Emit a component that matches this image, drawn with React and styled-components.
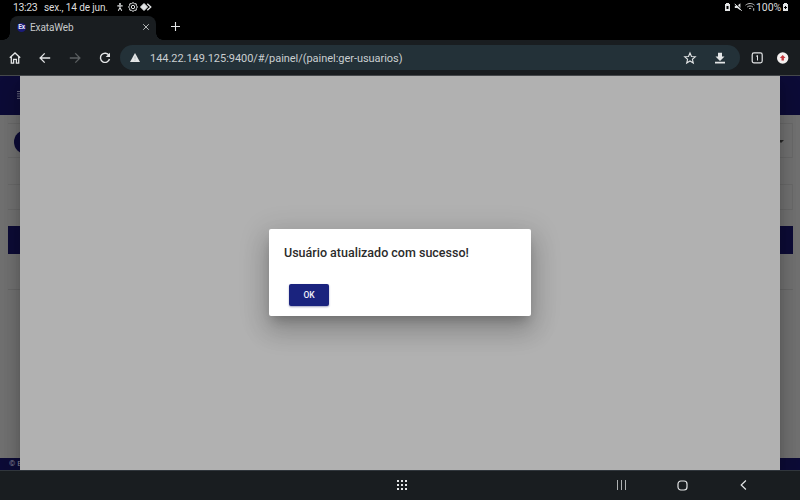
import React from 'react';
import styled, { createGlobalStyle } from 'styled-components';

const GlobalStyle = createGlobalStyle`
  * { box-sizing: border-box; }
  body { margin: 0; background: #000; font-family: Roboto, "Liberation Sans", sans-serif; }
`;

const Screen = styled.div`
  width: 800px;
  height: 500px;
  display: flex;
  flex-direction: column;
  overflow: hidden;
  background: #000;
`;

const StatusBar = styled.header`
  height: 16px;
  flex: none;
  display: flex;
  align-items: flex-start;
  justify-content: space-between;
  padding: 0 12px 0 13px;
  color: #dedede;
  font-size: 10.5px;
  line-height: 16px;
  white-space: nowrap;
`;

const StatusGroup = styled.div`
  display: flex;
  align-items: center;
  height: 14px;
`;

const Clock = styled.span`
  width: 31px;
  height: 15px;
  letter-spacing: -0.4px;
`;

const DateText = styled.span`
  width: 72px;
  height: 15px;
  font-size: 10px;
  letter-spacing: -0.12px;
`;

const Battery = styled.span`
  width: 27px;
  height: 15px;
  font-size: 10.5px;
  letter-spacing: -0.05px;
`;

const Glyph = styled.svg`
  display: block;
  flex: none;
  width: ${p => p.$w || 12}px;
  height: ${p => p.$h || p.$w || 12}px;
  margin-left: ${p => p.$gap || 0}px;
  color: ${p => p.$color || '#e3e5e6'};
  fill: none;
  stroke: currentColor;
  stroke-width: ${p => p.$stroke || 1.3};
  overflow: visible;
`;

const TabStrip = styled.div`
  height: 24px;
  flex: none;
  display: flex;
  padding-left: 10px;
`;

const Tab = styled.div`
  position: relative;
  width: 146px;
  height: 24px;
  display: flex;
  align-items: center;
  padding: 0 6px 2px 7px;
  border-radius: 8px 8px 0 0;
  background: #191d20;
  color: #c7cacb;
  font-size: 10px;
  letter-spacing: -0.12px;
  &::before, &::after {
    content: "";
    position: absolute;
    bottom: 0;
    width: 7px;
    height: 7px;
  }
  &::before { left: -7px; background: radial-gradient(circle at 0 0, transparent 6.5px, #191d20 7px); }
  &::after { right: -7px; background: radial-gradient(circle at 100% 0, transparent 6.5px, #191d20 7px); }
`;

const Favicon = styled.span`
  width: 9px;
  height: 9px;
  margin-right: 4px;
  display: grid;
  place-items: center;
  border-radius: 50%;
  background: #1b1b78;
  color: #e8e8f4;
  font-size: 6.5px;
  font-weight: 700;
  letter-spacing: -0.2px;
`;

const TabTitle = styled.span`
  flex: 1;
`;

const Toolbar = styled.nav`
  height: 36px;
  flex: none;
  display: flex;
  align-items: center;
  padding-left: 9px;
  background: #191d20;
  border-bottom: 1px solid #45484b;
`;

const AddressBar = styled.div`
  width: 620px;
  height: 25px;
  margin-left: 9px;
  padding: 0 14px 0 10px;
  display: flex;
  align-items: center;
  border-radius: 13px;
  background: #233138;
`;

const Address = styled.span`
  flex: 1;
  margin: 1px 0 0 10px;
  color: #c9ced0;
  font-size: 11px;
  letter-spacing: -0.04px;
`;

const Page = styled.main`
  position: relative;
  height: 394px;
  flex: none;
  display: flex;
  flex-direction: column;
  overflow: hidden;
  background: #747474;
`;

const PageHeader = styled.div`
  height: 39px;
  flex: none;
  display: flex;
  align-items: center;
  padding: 0 0 2px 17px;
  background: #0d0c38;
`;

const PageBody = styled.div`
  flex: 1;
  display: flex;
  flex-direction: column;
  padding: 8px 7px 0 8px;
`;

const FieldRow = styled.div`
  height: ${p => p.$h}px;
  margin-bottom: ${p => p.$after}px;
  display: flex;
  align-items: center;
  justify-content: space-between;
  padding: 2px 8px 0 6px;
  border: 1px solid #6c6c6c;
  border-width: 1px 1px 1px 0;
`;

const RoundButton = styled.span`
  width: 24px;
  height: 24px;
  border-radius: 50%;
  background: #0d0c38;
`;

const Caret = styled.span`
  border: 3px solid transparent;
  border-top-color: #292929;
  border-bottom: 0;
`;

const TableHead = styled.div`
  height: 28px;
  margin-bottom: 35px;
  background: #0d0c38;
`;

const Rule = styled.div`
  height: 1px;
  background: #6a6a6a;
`;

const PageFooter = styled.footer`
  height: 12px;
  flex: none;
  padding-left: 9px;
  background: #0d0c38;
  color: #8d8d9f;
  font-size: 8px;
  line-height: 11px;
`;

const Sheet = styled.section`
  position: absolute;
  inset: 0 20px;
  display: flex;
  justify-content: center;
  align-items: center;
  padding-bottom: 2px;
  background: #b1b1b1;
  box-shadow: 0 7px 10px -4px rgba(0, 0, 0, .2), 0 15px 24px 2px rgba(0, 0, 0, .15), 0 6px 28px 5px rgba(0, 0, 0, .12);
`;

const Dialog = styled.div`
  width: 262px;
  height: 87px;
  display: flex;
  flex-direction: column;
  align-items: flex-start;
  padding: 16px 15px 10px;
  border-radius: 2px;
  background: #fff;
  box-shadow: 0 7px 10px -4px rgba(0, 0, 0, .2), 0 15px 24px 2px rgba(0, 0, 0, .15), 0 6px 28px 5px rgba(0, 0, 0, .12);
`;

const Message = styled.h2`
  margin: 0 0 23px;
  color: #2b2b2b;
  font-size: 12.5px;
  line-height: 16px;
  font-weight: 500;
  letter-spacing: 0;
`;

const OkButton = styled.button`
  width: 40px;
  height: 22px;
  margin: 0 0 0 5px;
  padding: 0;
  border: 0;
  border-radius: 2px;
  background: #1a237e;
  color: #f2f2fa;
  font: 500 8.5px/22px Roboto, sans-serif;
  box-shadow: 0 1px 2px rgba(20, 25, 100, .4);
`;

const SystemNav = styled.footer`
  height: 30px;
  flex: none;
  display: flex;
  align-items: center;
  padding: 0 0 1px 397px;
  background: #191d20;
  border-top: 1px solid #30363c;
`;

export default function App() {
  return (
    <>
      <GlobalStyle />
      <Screen>
        <StatusBar>
          <StatusGroup>
            <Clock>13:23</Clock>
            <DateText>sex., 14 de jun.</DateText>
            <Glyph $w={8} $h={8} $stroke={1.2} viewBox="0 0 8 9">
              <circle cx="4" cy="1.2" r="1.1" fill="currentColor" stroke="none" />
              <path d="M1 3.2h6M4 3v2.8M4 5.4 2 8.7M4 5.4l2 3.3" />
            </Glyph>
            <Glyph $w={10} $gap={4} $stroke={1} viewBox="0 0 10 10">
              <path d="M5 .6 6.4 1.6 8.2 1.8 8.4 3.6 9.4 5 8.4 6.4 8.2 8.2 6.4 8.4 5 9.4 3.6 8.4 1.8 8.2 1.6 6.4.6 5 1.6 3.6 1.8 1.8 3.6 1.6z" />
              <circle cx="5" cy="5" r="1.7" />
            </Glyph>
            <Glyph $w={12} $h={8} $gap={2} $stroke={1} viewBox="0 0 12 8">
              <path d="m4 .5 3.5 3.5L4 7.5.5 4z" fill="currentColor" />
              <path d="m7.3.7 3.5 3.3-3.5 3.3" strokeWidth="1.3" />
            </Glyph>
          </StatusGroup>
          <StatusGroup>
            <Glyph $w={5} $h={8} viewBox="0 0 5 8">
              <path d="M1 0h3v1h1v7H0V1h1z" fill="currentColor" stroke="none" />
              <rect x="1.5" y="3" width="2" height="3" fill="#000" stroke="none" />
            </Glyph>
            <Glyph $w={9} $h={8} $gap={4} $stroke={1} viewBox="0 0 9 8">
              <path d="M.8 2.8h2.4L6.4.3v7L3.2 5H.8z" fill="currentColor" stroke="none" />
              <path d="m1.5.2 7 7" stroke="#000" />
              <path d="m.7.8 7 7" />
            </Glyph>
            <Glyph $w={11} $h={8} $gap={2} $stroke={1} $color="#bdbdbd" viewBox="0 0 11 8">
              <path d="M.5 2.2c3-2.3 6.4-2.3 9 0M2.2 4c2-1.4 4-1.4 5.7 0M4 5.7q1.2-.7 2.2 0M8.7 5.2v2.6" />
            </Glyph>
            <Battery>100%</Battery>
            <Glyph $w={5} $h={8} viewBox="0 0 5 8">
              <path d="M1 0h3v1h1v7H0V1h1z" fill="currentColor" stroke="none" />
              <path d="M2.5 3v3M1 4.5h3" stroke="#000" strokeWidth="1" />
            </Glyph>
          </StatusGroup>
        </StatusBar>

        <TabStrip>
          <Tab>
            <Favicon>Ex</Favicon>
            <TabTitle>ExataWeb</TabTitle>
            <Glyph $w={8} $stroke={1} $color="#b4b7b8" viewBox="0 0 8 8"><path d="m1.2 1.2 5.6 5.6m0-5.6L1.2 6.8" /></Glyph>
          </Tab>
          <Glyph $w={9} $h={22} $gap={15} $stroke={1.1} viewBox="0 0 9 22"><path d="M4.5 6v9M0 10.5h9" /></Glyph>
        </TabStrip>

        <Toolbar>
          <Glyph $w={12} viewBox="0 0 12 12"><path d="M2.3 4.7v6.4h2.3V7.3h2.8v3.8h2.3V4.7M.8 5.8 6 1l5.2 4.8" /></Glyph>
          <Glyph $gap={18} viewBox="0 0 12 12"><path d="M11.2 6H1.3M5.7 1.4 1.1 6l4.6 4.6" /></Glyph>
          <Glyph $gap={18} $color="#5b5f61" viewBox="0 0 12 12"><path d="M.8 6h9.9M6.3 1.4 10.9 6l-4.6 4.6" /></Glyph>
          <Glyph $gap={18} $stroke={1.4} viewBox="0 0 12 12">
            <path d="M10 3.4A4.6 4.6 0 1 0 10.5 7" />
            <path d="M11 .8v4.3H6.7z" fill="currentColor" stroke="none" />
          </Glyph>
          <AddressBar>
            <Glyph $w={10} $h={9} viewBox="0 0 10 9">
              <path d="m5 0 5 9H0z" fill="currentColor" stroke="none" />
              <path d="M5 3.4v2.4M5 6.7v1" stroke="#a3adb1" strokeWidth=".8" />
            </Glyph>
            <Address>144.22.149.125:9400/#/painel/(painel:ger-usuarios)</Address>
            <Glyph $w={12} $stroke={1.1} viewBox="0 0 12 12"><path d="m6 1 1.5 3.5 3.8.3-2.9 2.5.9 3.7L6 9l-3.3 2 .9-3.7L.7 4.8l3.8-.3z" /></Glyph>
            <Glyph $w={12} $gap={18} viewBox="0 0 12 12">
              <path d="M4 .8h4v3.7h2.5L6 9 1.5 4.5H4zM1 9.8h10v1.6H1z" fill="currentColor" stroke="none" />
            </Glyph>
          </AddressBar>
          <Glyph $w={12} $gap={11} $stroke={1.2} viewBox="0 0 12 12">
            <rect x="1.2" y=".9" width="10" height="10" rx="1.8" />
            <path d="m5.1 4.3 1.4-.8v5" strokeWidth="1" />
          </Glyph>
          <Glyph $w={12} $gap={14} viewBox="0 0 12 12">
            <circle cx="5.7" cy="6" r="5.7" fill="#f4f1f0" stroke="none" />
            <path d="m5.7 3 2.8 3H6.9v2.6H4.5V6H2.9z" fill="#c4373d" stroke="none" />
          </Glyph>
        </Toolbar>

        <Page>
          <PageHeader>
            <Glyph $w={10} $h={8} $stroke={1} $color="#6a6a80" viewBox="0 0 10 8"><path d="M0 .5h9M0 2.8h9M0 5.1h9M0 7.4h9" /></Glyph>
          </PageHeader>
          <PageBody>
            <FieldRow $h={35} $after={26}><RoundButton /><Caret /></FieldRow>
            <FieldRow $h={26} $after={16} />
            <TableHead />
            <Rule />
          </PageBody>
          <PageFooter>© Exata</PageFooter>
          <Sheet>
            <Dialog>
              <Message>Usuário atualizado com sucesso!</Message>
              <OkButton>OK</OkButton>
            </Dialog>
          </Sheet>
        </Page>

        <SystemNav>
          <Glyph $w={10} viewBox="0 0 10 10">
            <path d="M0 1h10M0 5h10M0 9h10" strokeWidth="2" strokeDasharray="2 2" />
          </Glyph>
          <Glyph $w={10} $gap={210} $stroke={1} $color="#aeb1b2" viewBox="0 0 10 10"><path d="M.5 0v10M4.5 0v10M8.5 0v10" /></Glyph>
          <Glyph $w={11} $gap={50} $stroke={1.2} viewBox="0 0 11 11"><rect x="1" y="1" width="9" height="9" rx="2.9" /></Glyph>
          <Glyph $w={7} $h={10} $gap={52} $stroke={1.2} viewBox="0 0 7 10"><path d="M5.9.5 1.2 5l4.7 4.5" /></Glyph>
        </SystemNav>
      </Screen>
    </>
  );
}
